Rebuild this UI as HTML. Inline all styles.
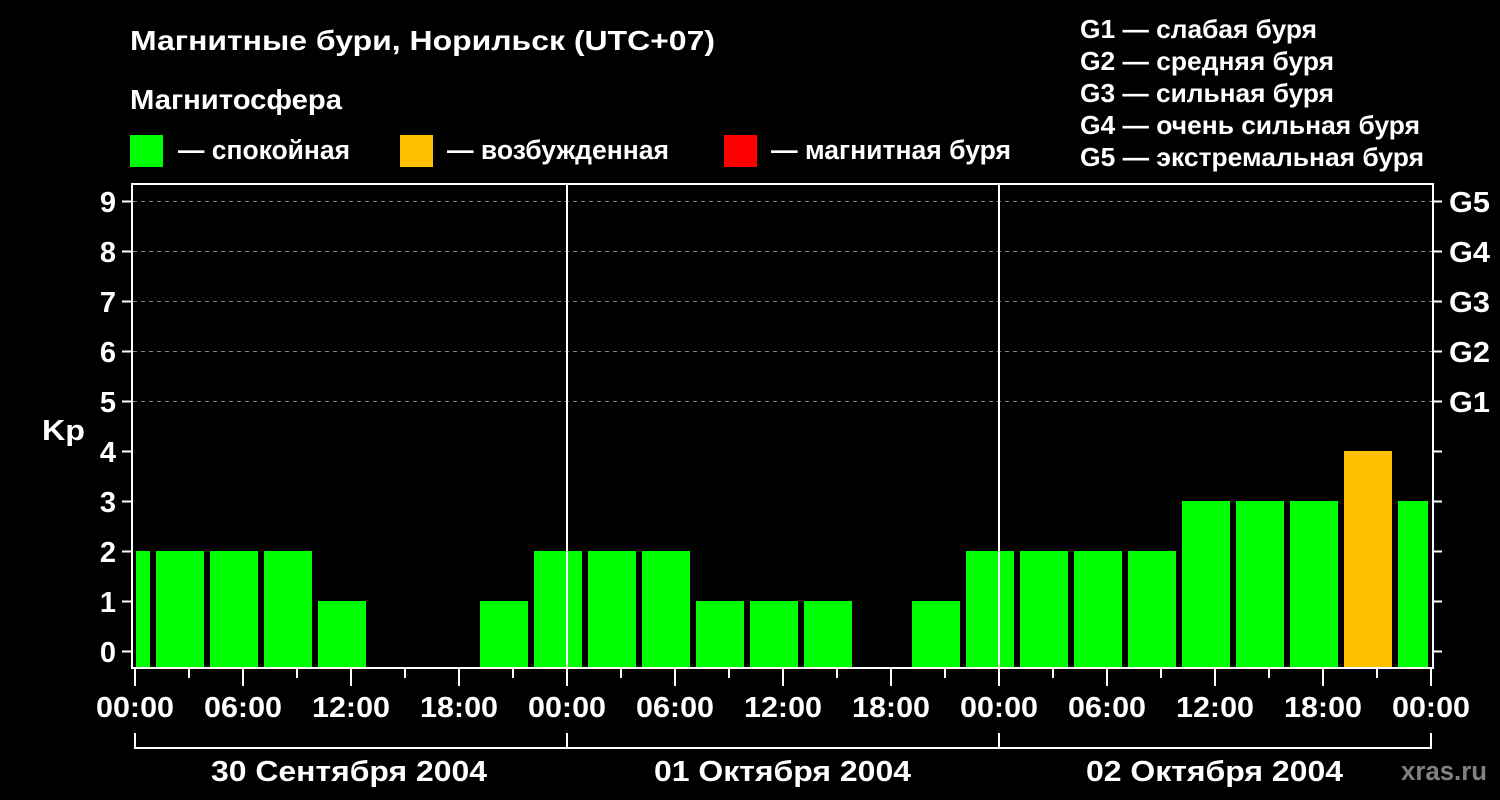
<!DOCTYPE html>
<html><head><meta charset="utf-8"><style>
html,body{margin:0;padding:0;background:#000;}
svg{display:block;}
text{font-family:"Liberation Sans",Arial,sans-serif;font-weight:bold;fill:#fff;}
</style></head><body>
<svg width="1500" height="800" viewBox="0 0 1500 800" xmlns="http://www.w3.org/2000/svg">
<rect width="1500" height="800" fill="#000"/>
<text x="130" y="50" font-size="28" textLength="585" lengthAdjust="spacingAndGlyphs">Магнитные бури, Норильск (UTC+07)</text>
<text x="130" y="109" font-size="28" textLength="212" lengthAdjust="spacingAndGlyphs">Магнитосфера</text>
<rect x="130" y="135" width="33" height="32" fill="#00ff00"/>
<text x="178" y="159" font-size="27" textLength="172" lengthAdjust="spacingAndGlyphs">— спокойная</text>
<rect x="400" y="135" width="33" height="32" fill="#ffc000"/>
<text x="447" y="159" font-size="27" textLength="222" lengthAdjust="spacingAndGlyphs">— возбужденная</text>
<rect x="724" y="135" width="33" height="32" fill="#ff0000"/>
<text x="771" y="159" font-size="27" textLength="240" lengthAdjust="spacingAndGlyphs">— магнитная буря</text>
<g font-size="26">
<text x="1080" y="38" textLength="237" lengthAdjust="spacingAndGlyphs">G1 — слабая буря</text>
<text x="1080" y="70" textLength="254" lengthAdjust="spacingAndGlyphs">G2 — средняя буря</text>
<text x="1080" y="102" textLength="254" lengthAdjust="spacingAndGlyphs">G3 — сильная буря</text>
<text x="1080" y="134" textLength="340" lengthAdjust="spacingAndGlyphs">G4 — очень сильная буря</text>
<text x="1080" y="166" textLength="344" lengthAdjust="spacingAndGlyphs">G5 — экстремальная буря</text>
</g>
<g stroke="#888" stroke-width="1" stroke-dasharray="4,4">
<line x1="133" y1="201.5" x2="1432" y2="201.5"/>
<line x1="133" y1="251.5" x2="1432" y2="251.5"/>
<line x1="133" y1="301.5" x2="1432" y2="301.5"/>
<line x1="133" y1="351.5" x2="1432" y2="351.5"/>
<line x1="133" y1="401.5" x2="1432" y2="401.5"/>
</g>
<g fill="#00ff00">
<rect x="136" y="551" width="14" height="116"/>
<rect x="156" y="551" width="48" height="116"/>
<rect x="210" y="551" width="48" height="116"/>
<rect x="264" y="551" width="48" height="116"/>
<rect x="318" y="601" width="48" height="66"/>
<rect x="480" y="601" width="48" height="66"/>
<rect x="534" y="551" width="48" height="116"/>
<rect x="588" y="551" width="48" height="116"/>
<rect x="642" y="551" width="48" height="116"/>
<rect x="696" y="601" width="48" height="66"/>
<rect x="750" y="601" width="48" height="66"/>
<rect x="804" y="601" width="48" height="66"/>
<rect x="912" y="601" width="48" height="66"/>
<rect x="966" y="551" width="48" height="116"/>
<rect x="1020" y="551" width="48" height="116"/>
<rect x="1074" y="551" width="48" height="116"/>
<rect x="1128" y="551" width="48" height="116"/>
<rect x="1182" y="501" width="48" height="166"/>
<rect x="1236" y="501" width="48" height="166"/>
<rect x="1290" y="501" width="48" height="166"/>
<rect x="1398" y="501" width="30" height="166"/>
</g>
<rect x="1344" y="451" width="48" height="216" fill="#ffc000"/>
<g stroke="#fff" stroke-width="2" fill="none">
<rect x="132" y="184" width="1301" height="484"/>
<line x1="567" y1="183" x2="567" y2="668"/>
<line x1="999" y1="183" x2="999" y2="668"/>
</g>
<g stroke="#fff" stroke-width="2">
<line x1="122" y1="201.5" x2="131" y2="201.5"/><line x1="122" y1="251.5" x2="131" y2="251.5"/>
<line x1="122" y1="301.5" x2="131" y2="301.5"/><line x1="122" y1="351.5" x2="131" y2="351.5"/>
<line x1="122" y1="401.5" x2="131" y2="401.5"/><line x1="122" y1="451.5" x2="131" y2="451.5"/>
<line x1="122" y1="501.5" x2="131" y2="501.5"/><line x1="122" y1="551.5" x2="131" y2="551.5"/>
<line x1="122" y1="601.5" x2="131" y2="601.5"/><line x1="122" y1="651.5" x2="131" y2="651.5"/>
<line x1="1434" y1="201.5" x2="1442" y2="201.5"/><line x1="1434" y1="251.5" x2="1442" y2="251.5"/>
<line x1="1434" y1="301.5" x2="1442" y2="301.5"/><line x1="1434" y1="351.5" x2="1442" y2="351.5"/>
<line x1="1434" y1="401.5" x2="1442" y2="401.5"/><line x1="1434" y1="451.5" x2="1442" y2="451.5"/>
<line x1="1434" y1="501.5" x2="1442" y2="501.5"/><line x1="1434" y1="551.5" x2="1442" y2="551.5"/>
<line x1="1434" y1="601.5" x2="1442" y2="601.5"/><line x1="1434" y1="651.5" x2="1442" y2="651.5"/>
</g>
<g font-size="29" text-anchor="end">
<text x="116" y="212">9</text><text x="116" y="262">8</text><text x="116" y="312">7</text>
<text x="116" y="362">6</text><text x="116" y="412">5</text><text x="116" y="462">4</text>
<text x="116" y="512">3</text><text x="116" y="562">2</text><text x="116" y="612">1</text>
<text x="116" y="662">0</text>
</g>
<text x="42" y="440" font-size="29" textLength="43" lengthAdjust="spacingAndGlyphs">Kp</text>
<g font-size="29">
<text x="1449" y="212" textLength="41" lengthAdjust="spacingAndGlyphs">G5</text>
<text x="1449" y="262" textLength="41" lengthAdjust="spacingAndGlyphs">G4</text>
<text x="1449" y="312" textLength="41" lengthAdjust="spacingAndGlyphs">G3</text>
<text x="1449" y="362" textLength="41" lengthAdjust="spacingAndGlyphs">G2</text>
<text x="1449" y="412" textLength="41" lengthAdjust="spacingAndGlyphs">G1</text>
</g>
<g stroke="#fff" stroke-width="2">
<line x1="135" y1="669" x2="135" y2="686"/><line x1="189" y1="669" x2="189" y2="678"/>
<line x1="243" y1="669" x2="243" y2="686"/><line x1="297" y1="669" x2="297" y2="678"/>
<line x1="351" y1="669" x2="351" y2="686"/><line x1="405" y1="669" x2="405" y2="678"/>
<line x1="459" y1="669" x2="459" y2="686"/><line x1="513" y1="669" x2="513" y2="678"/>
<line x1="567" y1="669" x2="567" y2="686"/><line x1="621" y1="669" x2="621" y2="678"/>
<line x1="675" y1="669" x2="675" y2="686"/><line x1="729" y1="669" x2="729" y2="678"/>
<line x1="783" y1="669" x2="783" y2="686"/><line x1="837" y1="669" x2="837" y2="678"/>
<line x1="891" y1="669" x2="891" y2="686"/><line x1="945" y1="669" x2="945" y2="678"/>
<line x1="999" y1="669" x2="999" y2="686"/><line x1="1053" y1="669" x2="1053" y2="678"/>
<line x1="1107" y1="669" x2="1107" y2="686"/><line x1="1161" y1="669" x2="1161" y2="678"/>
<line x1="1215" y1="669" x2="1215" y2="686"/><line x1="1269" y1="669" x2="1269" y2="678"/>
<line x1="1323" y1="669" x2="1323" y2="686"/><line x1="1377" y1="669" x2="1377" y2="678"/>
<line x1="1431" y1="669" x2="1431" y2="686"/>
</g>
<g font-size="29" text-anchor="middle">
<text x="135" y="717" textLength="78" lengthAdjust="spacingAndGlyphs">00:00</text>
<text x="243" y="717" textLength="78" lengthAdjust="spacingAndGlyphs">06:00</text>
<text x="351" y="717" textLength="78" lengthAdjust="spacingAndGlyphs">12:00</text>
<text x="459" y="717" textLength="78" lengthAdjust="spacingAndGlyphs">18:00</text>
<text x="567" y="717" textLength="78" lengthAdjust="spacingAndGlyphs">00:00</text>
<text x="675" y="717" textLength="78" lengthAdjust="spacingAndGlyphs">06:00</text>
<text x="783" y="717" textLength="78" lengthAdjust="spacingAndGlyphs">12:00</text>
<text x="891" y="717" textLength="78" lengthAdjust="spacingAndGlyphs">18:00</text>
<text x="999" y="717" textLength="78" lengthAdjust="spacingAndGlyphs">00:00</text>
<text x="1107" y="717" textLength="78" lengthAdjust="spacingAndGlyphs">06:00</text>
<text x="1215" y="717" textLength="78" lengthAdjust="spacingAndGlyphs">12:00</text>
<text x="1323" y="717" textLength="78" lengthAdjust="spacingAndGlyphs">18:00</text>
<text x="1431" y="717" textLength="78" lengthAdjust="spacingAndGlyphs">00:00</text>
</g>
<g stroke="#fff" stroke-width="2" fill="none">
<line x1="135" y1="748" x2="1431" y2="748"/>
<line x1="135" y1="733" x2="135" y2="749"/>
<line x1="567" y1="733" x2="567" y2="749"/>
<line x1="999" y1="733" x2="999" y2="749"/>
<line x1="1431" y1="733" x2="1431" y2="749"/>
</g>
<g font-size="29">
<text x="211" y="781" textLength="276" lengthAdjust="spacingAndGlyphs">30 Сентября 2004</text>
<text x="654" y="781" textLength="257" lengthAdjust="spacingAndGlyphs">01 Октября 2004</text>
<text x="1086" y="781" textLength="257" lengthAdjust="spacingAndGlyphs">02 Октября 2004</text>
</g>
<text x="1401" y="780" font-size="27" textLength="86" lengthAdjust="spacingAndGlyphs" style="fill:#808080">xras.ru</text>
</svg>
</body></html>
